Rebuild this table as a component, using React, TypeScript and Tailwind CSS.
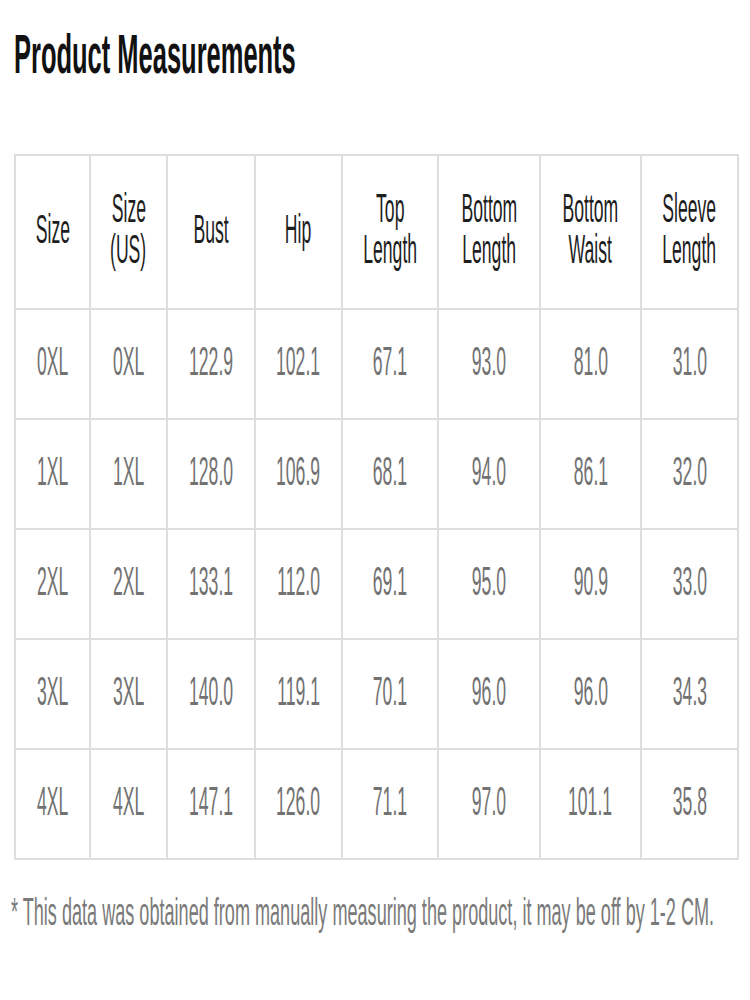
const headers = [
  ["Size"],
  ["Size", "(US)"],
  ["Bust"],
  ["Hip"],
  ["Top", "Length"],
  ["Bottom", "Length"],
  ["Bottom", "Waist"],
  ["Sleeve", "Length"],
];

const rows = [
  ["0XL", "0XL", "122.9", "102.1", "67.1", "93.0", "81.0", "31.0"],
  ["1XL", "1XL", "128.0", "106.9", "68.1", "94.0", "86.1", "32.0"],
  ["2XL", "2XL", "133.1", "112.0", "69.1", "95.0", "90.9", "33.0"],
  ["3XL", "3XL", "140.0", "119.1", "70.1", "96.0", "96.0", "34.3"],
  ["4XL", "4XL", "147.1", "126.0", "71.1", "97.0", "101.1", "35.8"],
];

const colWidths = ["w-[75px]", "w-[77px]", "w-[88px]", "w-[87px]", "w-[96px]", "w-[102px]", "w-[101px]", "w-[97px]"];

const App = () => {
  return (
    <div className="w-[750px] h-[1000px] overflow-hidden bg-white font-['Liberation_Sans',Arial,sans-serif]">
      <div className="pt-[26px] pl-[14px]">
        <h1 className="inline-block whitespace-nowrap text-[56px] leading-none font-bold text-[#111] origin-left scale-x-[0.455]">
          Product Measurements
        </h1>
      </div>

      <table className="mt-[72px] ml-[14px] w-[723px] table-fixed border-collapse">
        <colgroup>
          {colWidths.map((w, i) => (
            <col key={i} className={w} />
          ))}
        </colgroup>
        <thead>
          <tr className="h-[154px]">
            {headers.map((lines, i) => (
              <th key={i} className="border-2 border-[#dedede] p-0 font-normal overflow-visible">
                <div className="flex flex-col items-center justify-center pb-[6px]">
                  {lines.map((l) => (
                    <span
                      key={l}
                      className="inline-block whitespace-nowrap text-[40px] leading-[41px] text-[#1e1e1e] scale-x-[0.44]"
                    >
                      {l}
                    </span>
                  ))}
                </div>
              </th>
            ))}
          </tr>
        </thead>
        <tbody>
          {rows.map((row, r) => (
            <tr key={r} className="h-[110px]">
              {row.map((v, c) => (
                <td key={c} className="border-2 border-[#dedede] p-0 overflow-visible">
                  <div className="flex justify-center items-center pb-[6px]">
                    <span className="inline-block whitespace-nowrap text-[40px] leading-none text-[#727272] scale-x-[0.44]">
                      {v}
                    </span>
                  </div>
                </td>
              ))}
            </tr>
          ))}
        </tbody>
      </table>

      <div className="mt-[33px] pl-[11px]">
        <p className="inline-block whitespace-nowrap text-[38px] leading-none text-[#7a7a7a] origin-left scale-x-[0.476]">
          * This data was obtained from manually measuring the product, it may be off by 1-2 CM.
        </p>
      </div>

      <div className="mt-[69px] mx-[12px] h-[2px] bg-[#e6e6e6]" />
    </div>
  );
};

export default App;
